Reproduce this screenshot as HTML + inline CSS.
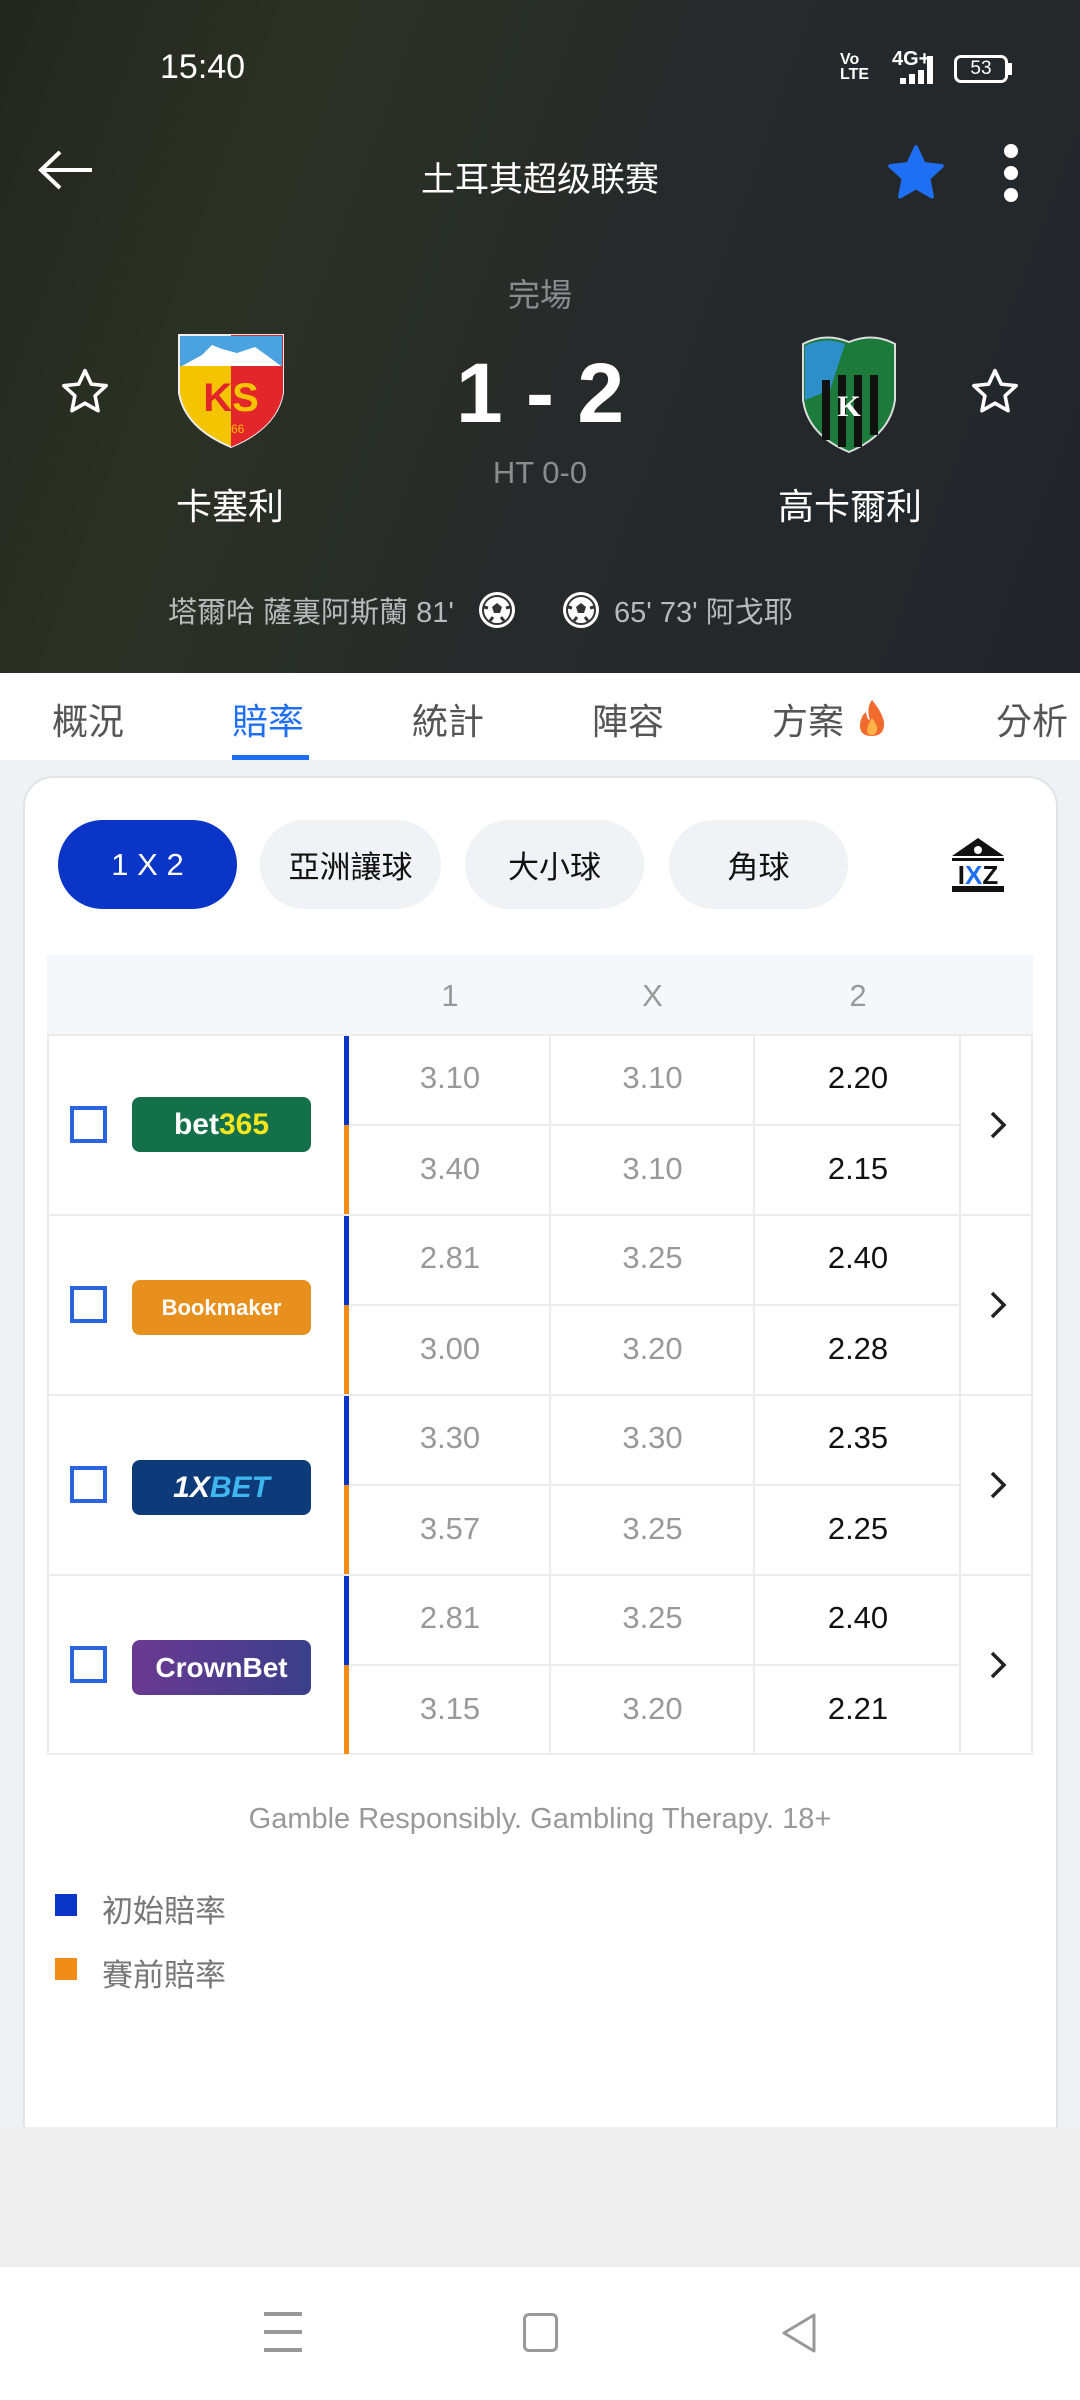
<!DOCTYPE html>
<html><head><meta charset="utf-8">
<style>
*{margin:0;padding:0;box-sizing:border-box}
body{width:1080px;height:2400px;position:relative;overflow:hidden;background:#eeeeee;font-family:"Liberation Sans","Noto Sans CJK TC",sans-serif}
.a{position:absolute}
.hdr{left:0;top:0;width:1080px;height:673px;background:linear-gradient(110deg,#23261f 0%,#2b3124 25%,#262a2b 55%,#22262b 100%)}
.w{color:#fff}
.tab{top:693px;font-size:36px;color:#555;}
.pill{top:820px;height:89px;border-radius:45px;background:#f1f2f5;font-size:31px;color:#111;display:flex;align-items:center;justify-content:center}
.cell{position:absolute;font-size:31px;text-align:center;color:#999}
.hl{position:absolute;height:2px;background:#ececec}
.vl{position:absolute;width:2px;background:#ececec}
.cb{position:absolute;left:70px;width:37px;height:37px;border:4px solid #2a64e0}
.logo{position:absolute;left:132px;width:179px;height:55px;border-radius:8px;display:flex;align-items:center;justify-content:center;font-weight:bold;color:#fff;font-size:28px}
</style></head><body>
<div class="a hdr"></div>
<div class="a w" style="left:160px;top:48px;font-size:34px">15:40</div>
<div class="a w" style="left:840px;top:52px;font-size:16px;line-height:15px;font-weight:bold">Vo<br>LTE</div>
<div class="a w" style="left:892px;top:48px;font-size:20px;font-weight:bold">4G+</div>
<div class="a" style="left:900px;top:68px;width:36px;height:16px;display:flex;gap:3px;align-items:flex-end"><i style="width:6px;height:6px;background:#fff"></i><i style="width:6px;height:10px;background:#fff"></i><i style="width:6px;height:14px;background:#fff"></i><i style="width:6px;height:28px;background:#fff;margin-top:-14px"></i></div>
<div class="a w" style="left:954px;top:55px;width:54px;height:28px;border:3px solid #fff;border-radius:7px;font-size:19px;text-align:center;line-height:22px">53</div>
<div class="a" style="left:1008px;top:63px;width:4px;height:12px;background:#fff"></div>
<svg class="a" style="left:36px;top:148px" width="60" height="44"><path d="M56 22H6M24 4L5 22L24 40" stroke="#fff" stroke-width="4" fill="none"/></svg>
<div class="a w" style="left:340px;top:152px;width:400px;text-align:center;font-size:34px">土耳其超级联赛</div>
<svg class="a" style="left:885px;top:142px" width="62" height="62" viewBox="0 0 24 24"><path d="M12 2l3 6.5 7 .8-5.2 4.8 1.4 7L12 17.6 5.8 21.1l1.4-7L2 9.3l7-.8z" fill="#1f6ff5" stroke="#1f6ff5" stroke-linejoin="round" stroke-width="1.5"/></svg>
<div class="a" style="left:1004px;top:144px;width:14px;height:14px;border-radius:7px;background:#fff"></div>
<div class="a" style="left:1004px;top:166px;width:14px;height:14px;border-radius:7px;background:#fff"></div>
<div class="a" style="left:1004px;top:188px;width:14px;height:14px;border-radius:7px;background:#fff"></div>
<div class="a" style="left:440px;top:270px;width:200px;text-align:center;font-size:32px;color:#8a8d90">完場</div>
<div class="a w" style="left:390px;top:343px;width:300px;text-align:center;font-size:84px;font-weight:bold;line-height:100px">1 - 2</div>
<div class="a" style="left:440px;top:455px;width:200px;text-align:center;font-size:31px;color:#8a8d90">HT 0-0</div>
<svg class="a" style="left:58px;top:365px" width="54" height="54" viewBox="0 0 24 24"><path d="M12 2.5l2.8 6 6.6.7-4.9 4.5 1.3 6.6L12 17l-5.8 3.3 1.3-6.6L2.6 9.2l6.6-.7z" fill="none" stroke="#fff" stroke-width="1.6" stroke-linejoin="round"/></svg>
<svg class="a" style="left:968px;top:365px" width="54" height="54" viewBox="0 0 24 24"><path d="M12 2.5l2.8 6 6.6.7-4.9 4.5 1.3 6.6L12 17l-5.8 3.3 1.3-6.6L2.6 9.2l6.6-.7z" fill="none" stroke="#fff" stroke-width="1.6" stroke-linejoin="round"/></svg>
<svg class="a" style="left:177px;top:333px" width="108" height="116" viewBox="0 0 108 116"><path d="M2 2H106V60Q100 95 54 114Q8 95 2 60Z" fill="#f5c400" stroke="#eee" stroke-width="2"/><path d="M54 2H106V60Q100 95 54 114Z" fill="#e3262b"/><rect x="3" y="3" width="102" height="30" fill="#4aa3e0"/><path d="M5 33L25 22L35 12L45 16L60 20L78 14L92 24L104 33Z" fill="#fff"/><text x="54" y="78" text-anchor="middle" font-size="40" font-weight="bold" fill="#e3262b" font-family="Liberation Sans">K<tspan fill="#f5c400">S</tspan></text><text x="54" y="100" text-anchor="middle" font-size="12" fill="#f5c400" font-family="Liberation Sans">1966</text></svg>
<svg class="a" style="left:800px;top:330px" width="98" height="124" viewBox="0 0 98 124"><path d="M3 14Q25 2 49 12Q73 2 95 14V70Q90 105 49 122Q8 105 3 70Z" fill="#1c7a3a" stroke="#ddd" stroke-width="2"/><path d="M5 16Q25 6 45 14L30 60L5 70Z" fill="#2d8fc9"/><g fill="#111"><rect x="22" y="50" width="8" height="60"/><rect x="38" y="45" width="8" height="72"/><rect x="54" y="45" width="8" height="72"/><rect x="70" y="45" width="8" height="60"/></g><text x="49" y="86" text-anchor="middle" font-size="30" font-weight="bold" fill="#fff" font-family="Liberation Serif">K</text></svg>
<div class="a w" style="left:130px;top:478px;width:200px;text-align:center;font-size:36px">卡塞利</div>
<div class="a w" style="left:740px;top:478px;width:220px;text-align:center;font-size:36px">高卡爾利</div>
<div class="a" style="left:168px;top:589px;font-size:29px;color:#b8babc">塔爾哈 薩裏阿斯蘭 81'</div>
<svg class="a" style="left:478px;top:591px" width="38" height="38" viewBox="0 0 38 38"><circle cx="19" cy="19" r="17" fill="#fff" stroke="#fff" stroke-width="2"/><circle cx="19" cy="19" r="14" fill="none" stroke="#333" stroke-width="2"/><path d="M19 12l5 4-2 6h-6l-2-6z" fill="#333"/><path d="M6 16l4 1M32 16l-4 1M12 30l3-4M26 30l-3-4" stroke="#333" stroke-width="3"/></svg>
<svg class="a" style="left:562px;top:591px" width="38" height="38" viewBox="0 0 38 38"><circle cx="19" cy="19" r="17" fill="#fff" stroke="#fff" stroke-width="2"/><circle cx="19" cy="19" r="14" fill="none" stroke="#333" stroke-width="2"/><path d="M19 12l5 4-2 6h-6l-2-6z" fill="#333"/><path d="M6 16l4 1M32 16l-4 1M12 30l3-4M26 30l-3-4" stroke="#333" stroke-width="3"/></svg>
<div class="a" style="left:614px;top:589px;font-size:29px;color:#b8babc">65' 73' 阿戈耶</div>
<div class="a" style="left:0;top:673px;width:1080px;height:87px;background:#fff"></div>
<div class="a tab" style="left:52px">概況</div>
<div class="a tab" style="left:232px;color:#1f6ff5">賠率</div>
<div class="a tab" style="left:412px">統計</div>
<div class="a tab" style="left:592px">陣容</div>
<div class="a tab" style="left:772px">方案</div>
<svg class="a" style="left:856px;top:698px" width="32" height="40" viewBox="0 0 32 40"><path d="M16 2Q26 14 28 24Q29 38 16 38Q3 38 4 26Q5 18 10 14Q11 22 14 22Q10 10 16 2Z" fill="#f26a2e"/><path d="M16 20Q22 28 21 32Q20 37 16 37Q11 37 11 32Q12 26 16 20Z" fill="#ffb347"/></svg>
<div class="a tab" style="left:996px">分析</div>
<div class="a" style="left:232px;top:755px;width:77px;height:7px;background:#1f6ff5"></div>
<div class="a" style="left:0;top:760px;width:1080px;height:1505px;background:#f0f1f4"></div>
<div class="a" style="left:23px;top:776px;width:1035px;height:1351px;background:#fff;border-radius:30px 30px 0 0;border:2px solid #e2e3e6;border-bottom:none"></div>
<div class="a" style="left:0;top:2127px;width:1080px;height:140px;background:#eeeeee"></div>
<div class="a pill" style="left:58px;width:179px;background:#0a35c6;color:#fff">1 X 2</div>
<div class="a pill" style="left:260px;width:181px">亞洲讓球</div>
<div class="a pill" style="left:465px;width:179px">大小球</div>
<div class="a pill" style="left:669px;width:179px">角球</div>
<svg class="a" style="left:948px;top:836px" width="60" height="60" viewBox="0 0 60 60"><path d="M30 2L4 20H56Z" fill="#111"/><circle cx="30" cy="14" r="4" fill="#fff"/><text x="30" y="48" text-anchor="middle" font-size="26" font-weight="bold" font-family="Liberation Sans" fill="#111">I<tspan fill="#1f6ff5">X</tspan>Z</text><rect x="4" y="50" width="52" height="6" fill="#111"/><rect x="4" y="22" width="52" height="3" fill="#111"/></svg>
<div class="a" style="left:47px;top:955px;width:986px;height:80px;background:#f5f7fb"></div>
<div class="cell" style="left:351px;top:978px;width:198px;color:#999">1</div>
<div class="cell" style="left:551px;top:978px;width:203px;color:#999">X</div>
<div class="cell" style="left:756px;top:978px;width:204px;color:#999">2</div>
<div class="vl" style="left:47px;top:1035px;height:720px"></div>
<div class="vl" style="left:1031px;top:1035px;height:720px"></div>
<div class="vl" style="left:549px;top:1035px;height:720px"></div>
<div class="vl" style="left:753px;top:1035px;height:720px"></div>
<div class="vl" style="left:959px;top:1035px;height:720px"></div>
<div class="hl" style="left:47px;top:1034px;width:986px"></div>
<div class="hl" style="left:47px;top:1214px;width:986px"></div>
<div class="hl" style="left:47px;top:1394px;width:986px"></div>
<div class="hl" style="left:47px;top:1574px;width:986px"></div>
<div class="hl" style="left:47px;top:1753px;width:986px"></div>
<div class="hl" style="left:351px;top:1124px;width:609px"></div>
<div class="hl" style="left:351px;top:1304px;width:609px"></div>
<div class="hl" style="left:351px;top:1484px;width:609px"></div>
<div class="hl" style="left:351px;top:1664px;width:609px"></div>
<div class="a" style="left:344px;top:1036px;width:5px;height:89px;background:#0a35c6"></div><div class="a" style="left:344px;top:1125px;width:5px;height:89px;background:#f28c18"></div>
<div class="a" style="left:344px;top:1216px;width:5px;height:89px;background:#0a35c6"></div><div class="a" style="left:344px;top:1305px;width:5px;height:89px;background:#f28c18"></div>
<div class="a" style="left:344px;top:1396px;width:5px;height:89px;background:#0a35c6"></div><div class="a" style="left:344px;top:1485px;width:5px;height:89px;background:#f28c18"></div>
<div class="a" style="left:344px;top:1576px;width:5px;height:89px;background:#0a35c6"></div><div class="a" style="left:344px;top:1665px;width:5px;height:89px;background:#f28c18"></div>
<div class="cb" style="top:1106px"></div><div class="logo" style="top:1097px;background:#13704a;font-size:30px">bet<span style="color:#f6e51c">365</span></div>
<div class="cb" style="top:1286px"></div><div class="logo" style="top:1280px;background:#e8901e;font-size:22px">Bookmaker</div>
<div class="cb" style="top:1466px"></div><div class="logo" style="top:1460px;background:#0d3a78;font-style:italic;font-size:30px">1X<span style="color:#3fb6ee">BET</span></div>
<div class="cb" style="top:1646px"></div><div class="logo" style="top:1640px;background:linear-gradient(90deg,#6a3a92,#3a3f8a);font-size:28px">CrownBet</div>
<div class="cell" style="left:351px;top:1060px;width:198px">3.10</div><div class="cell" style="left:551px;top:1060px;width:203px">3.10</div><div class="cell" style="left:756px;top:1060px;width:204px;color:#111">2.20</div>
<div class="cell" style="left:351px;top:1151px;width:198px">3.40</div><div class="cell" style="left:551px;top:1151px;width:203px">3.10</div><div class="cell" style="left:756px;top:1151px;width:204px;color:#111">2.15</div>
<div class="cell" style="left:351px;top:1240px;width:198px">2.81</div><div class="cell" style="left:551px;top:1240px;width:203px">3.25</div><div class="cell" style="left:756px;top:1240px;width:204px;color:#111">2.40</div>
<div class="cell" style="left:351px;top:1331px;width:198px">3.00</div><div class="cell" style="left:551px;top:1331px;width:203px">3.20</div><div class="cell" style="left:756px;top:1331px;width:204px;color:#111">2.28</div>
<div class="cell" style="left:351px;top:1420px;width:198px">3.30</div><div class="cell" style="left:551px;top:1420px;width:203px">3.30</div><div class="cell" style="left:756px;top:1420px;width:204px;color:#111">2.35</div>
<div class="cell" style="left:351px;top:1511px;width:198px">3.57</div><div class="cell" style="left:551px;top:1511px;width:203px">3.25</div><div class="cell" style="left:756px;top:1511px;width:204px;color:#111">2.25</div>
<div class="cell" style="left:351px;top:1600px;width:198px">2.81</div><div class="cell" style="left:551px;top:1600px;width:203px">3.25</div><div class="cell" style="left:756px;top:1600px;width:204px;color:#111">2.40</div>
<div class="cell" style="left:351px;top:1691px;width:198px">3.15</div><div class="cell" style="left:551px;top:1691px;width:203px">3.20</div><div class="cell" style="left:756px;top:1691px;width:204px;color:#111">2.21</div>
<svg class="a" style="left:988px;top:1110px" width="20" height="30"><path d="M4 3L16 15L4 27" stroke="#222" stroke-width="3.5" fill="none"/></svg>
<svg class="a" style="left:988px;top:1290px" width="20" height="30"><path d="M4 3L16 15L4 27" stroke="#222" stroke-width="3.5" fill="none"/></svg>
<svg class="a" style="left:988px;top:1470px" width="20" height="30"><path d="M4 3L16 15L4 27" stroke="#222" stroke-width="3.5" fill="none"/></svg>
<svg class="a" style="left:988px;top:1650px" width="20" height="30"><path d="M4 3L16 15L4 27" stroke="#222" stroke-width="3.5" fill="none"/></svg>
<div class="a" style="left:0;top:1803px;width:1080px;text-align:center;font-size:29px;color:#999">Gamble Responsibly. Gambling Therapy. 18+</div>
<div class="a" style="left:55px;top:1894px;width:22px;height:22px;background:#0a35c6"></div>
<div class="a" style="left:102px;top:1886px;font-size:31px;color:#777">初始賠率</div>
<div class="a" style="left:55px;top:1958px;width:22px;height:22px;background:#f28c18"></div>
<div class="a" style="left:102px;top:1950px;font-size:31px;color:#777">賽前賠率</div>
<div class="a" style="left:0;top:2267px;width:1080px;height:133px;background:#fff"></div>
<div class="a" style="left:264px;top:2312px;width:38px;height:4px;background:#999"></div>
<div class="a" style="left:264px;top:2330px;width:38px;height:4px;background:#999"></div>
<div class="a" style="left:264px;top:2348px;width:38px;height:4px;background:#999"></div>
<div class="a" style="left:523px;top:2313px;width:35px;height:39px;border:3px solid #999;border-radius:6px"></div>
<svg class="a" style="left:778px;top:2312px" width="40" height="42"><path d="M36 3L6 21L36 39Z" stroke="#999" stroke-width="3" fill="none" stroke-linejoin="round"/></svg>
</body></html>
